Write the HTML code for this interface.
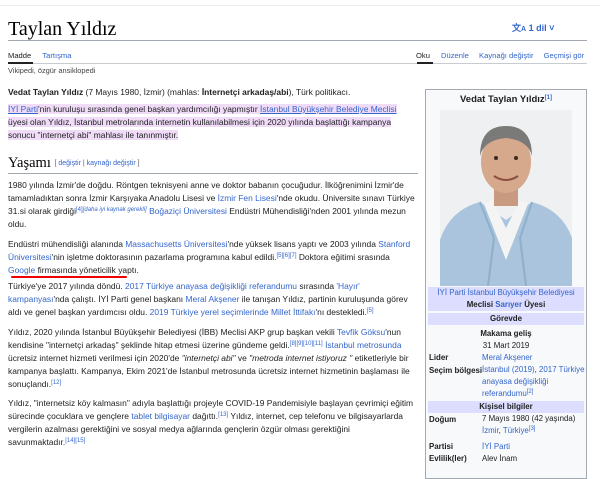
<!DOCTYPE html>
<html><head><meta charset="utf-8"><style>
*{margin:0;padding:0;box-sizing:border-box}
body{width:600px;height:465px;overflow:hidden;background:#fff;font-family:"Liberation Sans",Arial,sans-serif;color:#202122;position:relative;font-size:8.45px}
.a{position:absolute;white-space:nowrap;line-height:13px}
a{color:#3366cc;text-decoration:none}
.hl{background:#f1dcf8}
.u{text-decoration:underline}
sup{font-size:6px;line-height:0;vertical-align:3px;color:#3366cc}
.ib{position:absolute;left:425px;top:89px;width:162px;height:390px;border:1px solid #a2a9b1;background:#f8f9fa}
.ib .a{font-size:7.9px}
.c{left:0;width:160px;text-align:center}
.band{position:absolute;left:2px;width:156px;background:#ddddff}
b{font-weight:bold}
</style></head><body>
<div style="position:absolute;left:0;top:5px;width:600px;border-top:1px solid #eaecf0"></div>
<div class="a" style="left:8px;top:17px;font-family:'Liberation Serif',serif;font-size:20px;line-height:24px;color:#000">Taylan Yıldız</div>
<div class="a" style="left:512px;top:22px;font-size:9px;color:#3366cc;font-weight:bold">文<span style="font-size:7px">A</span> 1 dil ˅</div>
<div style="position:absolute;left:8px;top:40px;width:579px;border-top:1px solid #a2a9b1"></div>
<div class="a" style="left:8px;top:49px;font-size:7.6px">Madde <a style="margin-left:9px">Tartışma</a></div>
<div class="a" style="left:416px;top:49px;font-size:7.6px">Oku <a style="margin-left:9px">Düzenle</a> <a style="margin-left:8px">Kaynağı değiştir</a> <a style="margin-left:8px">Geçmişi gör</a></div>
<div style="position:absolute;left:8px;top:63px;width:579px;border-top:1px solid #c8ccd1"></div>
<div style="position:absolute;left:8px;top:62px;width:25px;border-top:2px solid #202122"></div>
<div style="position:absolute;left:417px;top:62px;width:16px;border-top:2px solid #202122"></div>
<div class="a" style="left:8px;top:64px;font-size:7.4px;color:#444">Vikipedi, özgür ansiklopedi</div>

<div class="a" style="left:8px;top:86px"><b>Vedat Taylan Yıldız</b> (7 Mayıs 1980, İzmir) (mahlas: <b>İnternetçi arkadaş/abi</b>), Türk politikacı.</div>
<div class="a" style="left:8px;top:103px"><span class="hl"><a class="u">İYİ Parti</a>'nin kuruluşu sırasında genel başkan yardımcılığı yapmıştır <a class="u">İstanbul Büyükşehir Belediye Meclisi</a></span></div>
<div class="a" style="left:8px;top:116px"><span class="hl">üyesi olan Yıldız, İstanbul metrolarında internetin kullanılabilmesi için 2020 yılında başlattığı kampanya</span></div>
<div class="a" style="left:8px;top:129px"><span class="hl">sonucu "internetçi abi" mahlası ile tanınmıştır.</span></div>

<div class="a" style="left:8px;top:154px;font-family:'Liberation Serif',serif;font-size:14.5px;line-height:18px;color:#000">Yaşamı <span style="font-family:'Liberation Sans',sans-serif;font-size:7px;color:#54595d;vertical-align:2px">[ <a>değiştir</a> | <a>kaynağı değiştir</a> ]</span></div>
<div style="position:absolute;left:8px;top:173px;width:410px;border-top:1px solid #a2a9b1"></div>

<div class="a" style="left:8px;top:179px">1980 yılında İzmir'de doğdu. Röntgen teknisyeni anne ve doktor babanın çocuğudur. İlköğrenimini İzmir'de</div>
<div class="a" style="left:8px;top:192px">tamamladıktan sonra İzmir Karşıyaka Anadolu Lisesi ve <a>İzmir Fen Lisesi</a>'nde okudu. Üniversite sınavı Türkiye</div>
<div class="a" style="left:8px;top:205px">31.si olarak girdiği<sup>[4]<i>[daha iyi kaynak gerekli]</i></sup> <a>Boğaziçi Üniversitesi</a> Endüstri Mühendisliği'nden 2001 yılında mezun</div>
<div class="a" style="left:8px;top:218px">oldu.</div>

<div class="a" style="left:8px;top:238px">Endüstri mühendisliği alanında <a>Massachusetts Üniversitesi</a>'nde yüksek lisans yaptı ve 2003 yılında <a>Stanford</a></div>
<div class="a" style="left:8px;top:251px"><a>Üniversitesi</a>'nin işletme doktorasının pazarlama programına kabul edildi.<sup>[5][6][7]</sup> Doktora eğitimi srasında</div>
<div class="a" style="left:8px;top:264px"><a>Google</a> firmasında yöneticilik yaptı.</div>
<div style="position:absolute;left:11px;top:276px;width:116px;height:2px;background:#e00;border-radius:1px"></div>

<div class="a" style="left:8px;top:280px">Türkiye'ye 2017 yılında döndü. <a>2017 Türkiye anayasa değişikliği referandumu</a> sırasında <a>'Hayır'</a></div>
<div class="a" style="left:8px;top:293px"><a>kampanyası</a>'nda çalıştı. İYİ Parti genel başkanı <a>Meral Akşener</a> ile tanışan Yıldız, partinin kuruluşunda görev</div>
<div class="a" style="left:8px;top:306px">aldı ve genel başkan yardımcısı oldu. <a>2019 Türkiye yerel seçimlerinde Millet İttifakı</a>'nı destekledi.<sup>[5]</sup></div>

<div class="a" style="left:8px;top:326px">Yıldız, 2020 yılında İstanbul Büyükşehir Belediyesi (İBB) Meclisi AKP grup başkan vekili <a>Tevfik Göksu</a>'nun</div>
<div class="a" style="left:8px;top:339px">kendisine "internetçi arkadaş" şeklinde hitap etmesi üzerine gündeme geldi.<sup>[8][9][10][11]</sup> <a>İstanbul metrosunda</a></div>
<div class="a" style="left:8px;top:352px">ücretsiz internet hizmeti verilmesi için 2020'de <i>"internetçi abi"</i> ve <i>"metroda internet istiyoruz "</i> etiketleriyle bir</div>
<div class="a" style="left:8px;top:365px">kampanya başlattı. Kampanya, Ekim 2021'de İstanbul metrosunda ücretsiz internet hizmetinin başlaması ile</div>
<div class="a" style="left:8px;top:378px">sonuçlandı.<sup>[12]</sup></div>

<div class="a" style="left:8px;top:397px">Yıldız, "internetsiz köy kalmasın" adıyla başlattığı projeyle COVID-19 Pandemisiyle başlayan çevrimiçi eğitim</div>
<div class="a" style="left:8px;top:410px">sürecinde çocuklara ve gençlere <a>tablet bilgisayar</a> dağıttı.<sup>[13]</sup> Yıldız, internet, cep telefonu ve bilgisayarlarda</div>
<div class="a" style="left:8px;top:423px">vergilerin azalması gerektiğini ve sosyal medya ağlarında gençlerin özgür olması gerektiğini</div>
<div class="a" style="left:8px;top:436px">savunmaktadır.<sup>[14][15]</sup></div>

<div class="ib">
<div class="a c" style="top:3px;font-size:9.5px;font-weight:bold">Vedat Taylan Yıldız<sup>[1]</sup></div>
<svg style="position:absolute;left:14px;top:20px" width="132" height="176" viewBox="0 0 132 176">
<rect width="132" height="176" fill="#eef0f1"/>
<path d="M0 176 L0 130 Q10 100 40 92 L66 110 L92 92 Q122 100 132 128 L132 176Z" fill="#a9c4dc"/>
<path d="M44 94 L66 150 L88 94 L80 90 L66 118 L52 90Z" fill="#f4f4f4"/>
<path d="M40 92 L54 128 L48 176" stroke="#8fafcc" stroke-width="2" fill="none"/>
<path d="M92 92 L80 128 L86 176" stroke="#8fafcc" stroke-width="2" fill="none"/>
<rect x="54" y="74" width="24" height="22" fill="#c89a80"/>
<ellipse cx="66" cy="52" rx="25" ry="31" fill="#d6a88c"/>
<path d="M40 46 Q40 16 66 16 Q92 16 92 46 Q88 30 66 28 Q44 30 40 46Z" fill="#7a7a78"/>
<path d="M54 66 Q66 74 78 66" stroke="#8a4f40" stroke-width="2" fill="none"/>
<circle cx="56" cy="48" r="2" fill="#3a2a20"/><circle cx="76" cy="48" r="2" fill="#3a2a20"/>
</svg>
<div class="band" style="top:197px;height:24px"></div>
<div class="a c" style="top:197px;line-height:12px"><a>İYİ Parti İstanbul Büyükşehir Belediyesi</a></div>
<div class="a c" style="top:209px;line-height:12px"><b>Meclisi <a>Sarıyer</a> Üyesi</b></div>
<div class="band" style="top:223px;height:12px"></div>
<div class="a c" style="top:222px"><b>Görevde</b></div>
<div class="a c" style="top:237px"><b>Makama geliş</b></div>
<div class="a c" style="top:249px">31 Mart 2019</div>
<div class="a" style="left:3px;top:261px"><b>Lider</b></div>
<div class="a" style="left:56px;top:261px"><a>Meral Akşener</a></div>
<div class="a" style="left:3px;top:274px"><b>Seçim bölgesi</b></div>
<div class="a" style="left:56px;top:274px;line-height:12px"><a>İstanbul (2019)</a>, <a>2017 Türkiye</a><br><a>anayasa değişikliği</a><br><a>referandumu</a><sup>[2]</sup></div>
<div class="band" style="top:311px;height:12px"></div>
<div class="a c" style="top:310px"><b>Kişisel bilgiler</b></div>
<div class="a" style="left:3px;top:323px"><b>Doğum</b></div>
<div class="a" style="left:56px;top:323px;line-height:12px">7 Mayıs 1980 (42 yaşında)<br><a>İzmir</a>, <a>Türkiye</a><sup>[3]</sup></div>
<div class="a" style="left:3px;top:350px"><b>Partisi</b></div>
<div class="a" style="left:56px;top:350px"><a>İYİ Parti</a></div>
<div class="a" style="left:3px;top:362px"><b>Evlilik(ler)</b></div>
<div class="a" style="left:56px;top:362px">Alev İnam</div>
</div>
</body></html>
